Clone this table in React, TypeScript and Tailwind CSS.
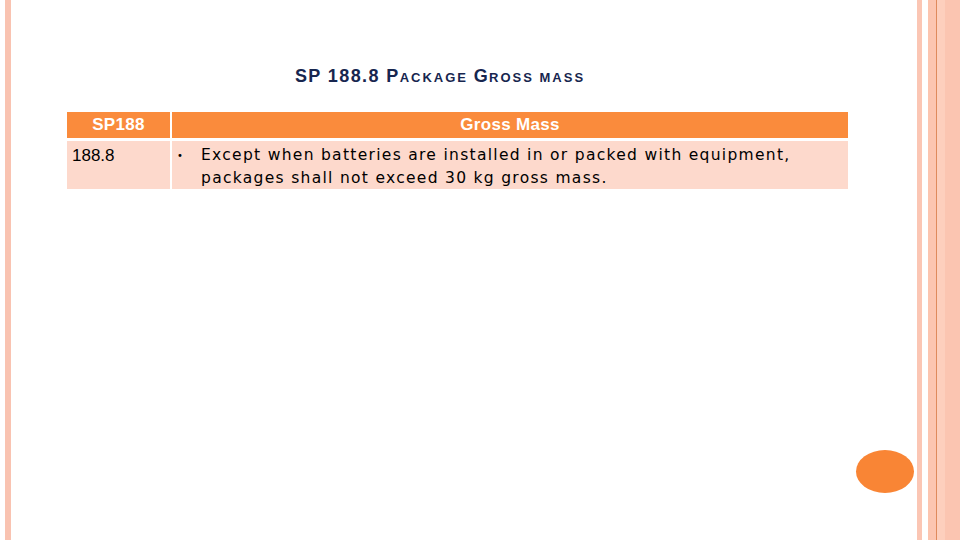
import React from "react";

const rows = [
  {
    code: "188.8",
    text: "Except when batteries are installed in or packed with equipment, packages shall not exceed 30 kg gross mass.",
  },
];

const sans = { fontFamily: '"Liberation Sans", Arial, sans-serif' };

const App = () => {
  return (
    <div className="relative flex w-[960px] h-[540px] bg-white overflow-hidden">
      {/* left edge stripe */}
      <div className="ml-[5px] w-[6px] h-full bg-[#f9c3b1]" />

      <div className="flex-1 flex flex-col">
        <h1
          className="mt-[64px] pr-[48px] flex justify-center items-baseline font-bold text-[#17264f] leading-[24px]"
          style={sans}
        >
          <span className="text-[18px] tracking-[1.4px] whitespace-pre">SP 188.8 P</span>
          <span className="text-[13px] tracking-[2px] whitespace-pre">ACKAGE </span>
          <span className="text-[18px] tracking-[1.4px]">G</span>
          <span className="text-[13px] tracking-[2px] whitespace-pre">ROSS MASS</span>
        </h1>

        <div className="ml-[56px] mt-[22px] w-[781px] grid grid-cols-[103px_1fr] gap-x-[2px] gap-y-[3px]">
          <div
            className="h-[26px] bg-[#fa8b3c] text-white font-bold text-[17px] tracking-[0.3px] flex items-center justify-center"
            style={sans}
          >
            SP188
          </div>
          <div
            className="h-[26px] bg-[#fa8b3c] text-white font-bold text-[17px] tracking-[0.3px] flex items-center justify-center"
            style={sans}
          >
            Gross Mass
          </div>

          {rows.map((r) => (
            <React.Fragment key={r.code}>
              <div
                className="h-[48px] bg-[#fdd9cc] text-[17px] text-black pl-[5px] pt-[5px] leading-[20px]"
                style={sans}
              >
                {r.code}
              </div>
              <div
                className="h-[48px] bg-[#fdd9cc] text-[15.5px] tracking-[1.3px] text-black flex pt-[3px] leading-[23px]"
                style={{ fontFamily: '"DejaVu Sans", Verdana, sans-serif' }}
              >
                <span className="w-[29px] pl-[5px] text-[10px] tracking-normal">•</span>
                <span className="flex-1 pr-2">{r.text}</span>
              </div>
            </React.Fragment>
          ))}
        </div>
      </div>

      {/* right edge stripes */}
      <div className="flex h-full">
        <div className="w-[5px] bg-[#fbc6b4]" />
        <div className="w-[6px] bg-white" />
        <div className="w-[8px] bg-[#fcc5b0]" />
        <div className="w-[1px] bg-[#df8a5c]" />
        <div className="w-[8px] bg-[#fdcfbd]" />
        <div className="w-[15px] bg-[#fbc5b1]" />
      </div>

      {/* orange dot */}
      <div className="absolute left-[856px] top-[450px] w-[58px] h-[43px] rounded-[50%] bg-[#f98535]" />
    </div>
  );
};

export default App;
